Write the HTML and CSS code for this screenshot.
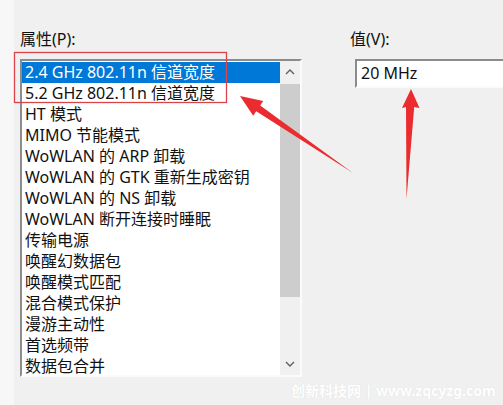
FILE: index.html
```html
<!DOCTYPE html>
<html lang="zh-CN">
<head>
    <meta charset="UTF-8">
    <meta name="viewport" content="width=device-width, initial-scale=1.0">
    <title>高级属性</title>
    <link rel="stylesheet" href="styles.css">
</head>
<body>
    <div class="panel">
        <div class="col-left">
            <div class="field-label">属性(P):</div>
            <div class="listbox">
                <ul class="items">
                    <li class="selected">2.4 GHz 802.11n 信道宽度</li>
                    <li>5.2 GHz 802.11n 信道宽度</li>
                    <li>HT 模式</li>
                    <li>MIMO 节能模式</li>
                    <li>WoWLAN 的 ARP 卸载</li>
                    <li>WoWLAN 的 GTK 重新生成密钥</li>
                    <li>WoWLAN 的 NS 卸载</li>
                    <li>WoWLAN 断开连接时睡眠</li>
                    <li>传输电源</li>
                    <li>唤醒幻数据包</li>
                    <li>唤醒模式匹配</li>
                    <li>混合模式保护</li>
                    <li>漫游主动性</li>
                    <li>首选频带</li>
                    <li>数据包合并</li>
                </ul>
                <div class="scrollbar">
                    <div class="sb-btn">
                        <svg width="10" height="6" viewBox="0 0 10 6"><path d="M1 5 L5 1 L9 5" fill="none" stroke="#606060" stroke-width="1.4"/></svg>
                    </div>
                    <div class="sb-track">
                        <div class="sb-thumb"></div>
                    </div>
                    <div class="sb-btn">
                        <svg width="10" height="6" viewBox="0 0 10 6"><path d="M1 1 L5 5 L9 1" fill="none" stroke="#606060" stroke-width="1.4"/></svg>
                    </div>
                </div>
            </div>
        </div>
        <div class="col-right">
            <div class="field-label">值(V):</div>
            <div class="value-box">20 MHz</div>
        </div>
    </div>

    <!-- 标注 -->
    <svg class="marks" width="503" height="405" viewBox="0 0 503 405">
        <rect x="14.5" y="52.5" width="212" height="50" fill="none" stroke="#d9444a" stroke-width="1.3"/>
        <polygon points="240,96 263.2,100.9 260.2,105.4 353,173 256.2,111.2 253.2,115.7" fill="#ea2b2f"/>
        <polygon points="411,89 419.5,108 414.2,107 406.5,199 406,107 402,108" fill="#ea2b2f"/>
    </svg>

    <div class="watermark">创新科技网 | www.zqcyzg.com</div>
</body>
</html>
```

FILE: styles.css
```css
html, body {
    margin: 0;
    height: 100%;
}
body {
    font-family: "Noto Sans", "Noto Sans CJK SC", sans-serif;
    font-size: 16px;
    color: #111;
    background: linear-gradient(to right, #f7f7f7 14px, #f0f0f0 14px);
    position: relative;
    overflow: hidden;
}
.panel {
    display: flex;
    padding: 29px 0 0 20px;
}
.field-label {
    height: 30px;
    line-height: 21px;
}
.col-right {
    margin-left: 48px;
    flex: 1;
}
.listbox {
    display: flex;
    width: 278px;
    height: 314px;
    border: 2px solid;
    border-color: #8c8c8c #fbfbfb #fbfbfb #8c8c8c;
    background: #fff;
    overflow: hidden;
}
.items {
    flex: 1;
    list-style: none;
    margin: 0;
    padding: 1px 0 0;
}
.items li {
    height: 21px;
    line-height: 21px;
    padding-left: 3px;
    white-space: nowrap;
}
.items li.selected {
    background-color: #0078d7;
    color: #fff;
}
.scrollbar {
    width: 20px;
    display: flex;
    flex-direction: column;
    background-color: #f0f0f0;
}
.sb-btn {
    height: 22px;
    display: flex;
    align-items: center;
    justify-content: center;
}
.sb-track {
    flex: 1;
    padding-top: 1px;
}
.sb-thumb {
    height: 213px;
    background-color: #cdcdcd;
}
.value-box {
    margin-left: 5px;
    height: 25px;
    line-height: 25px;
    padding-left: 4px;
    border: 2px solid;
    border-color: #8c8c8c #fbfbfb #fbfbfb #8c8c8c;
    border-right: none;
    background: #fff;
}
.marks {
    position: absolute;
    left: 0;
    top: 0;
    pointer-events: none;
}
.watermark {
    position: absolute;
    left: 291px;
    top: 380px;
    font-family: "Noto Sans", "Noto Sans CJK SC", sans-serif;
    font-size: 14px;
    font-weight: bold;
    color: #fff;
    text-shadow: 0 0 1px #d8d8d8;
    white-space: nowrap;
}
```
